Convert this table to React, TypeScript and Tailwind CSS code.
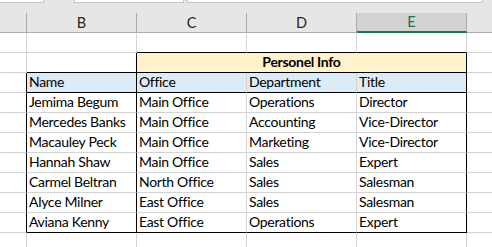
import React from "react";

const rows = [
  ["Jemima Begum", "Main Office", "Operations", "Director"],
  ["Mercedes Banks", "Main Office", "Accounting", "Vice-Director"],
  ["Macauley Peck", "Main Office", "Marketing", "Vice-Director"],
  ["Hannah Shaw", "Main Office", "Sales", "Expert"],
  ["Carmel Beltran", "North Office", "Sales", "Salesman"],
  ["Alyce Milner", "East Office", "Sales", "Salesman"],
  ["Aviana Kenny", "East Office", "Operations", "Expert"],
];

const grid = "border-[#d4d4d4]";
const cellText =
  "flex items-end px-[2px] pb-[2px] text-[14px] leading-[16px] tracking-[-0.3px] text-black whitespace-nowrap";

function Cell({
  className = "",
  children,
}: {
  className?: string;
  children?: React.ReactNode;
}) {
  return <div className={`h-[20px] shrink-0 ${cellText} ${className}`}>{children}</div>;
}

function ColHead({ label, active = false }: { label: string; active?: boolean }) {
  return (
    <div
      className={`flex h-[20px] w-[110px] shrink-0 items-center justify-center border-r border-[#ababab] text-[14.5px] ${
        active
          ? "border-b-2 border-b-[#217346] bg-[#d2d2d2] text-[#217346]"
          : "border-b border-b-[#ababab] text-[#262626]"
      }`}
    >
      {label}
    </div>
  );
}

export default function App() {
  return (
    <div
      className="h-[247px] w-[492px] overflow-hidden bg-white"
      style={{ fontFamily: "Lato, 'Liberation Sans', sans-serif" }}
    >
      {/* formula bar edge */}
      <div className="flex h-[3px] bg-[#e6e6e6]">
        <div className="w-[44px] border-r border-b border-[#c6c6c6] bg-white" />
        <div className="w-[30px]" />
        <div className="w-[110px] border-x border-b border-[#c6c6c6] bg-white" />
        <div className="w-[3px]" />
        <div className="w-[296px] border-x border-b border-[#c6c6c6] bg-white" />
      </div>
      <div className="h-[10px] bg-[#e6e6e6]" />

      {/* column letters */}
      <div className="flex bg-[#e6e6e6]">
        <div className="h-[20px] w-[27px] shrink-0 border-r border-b border-[#ababab]" />
        <ColHead label="B" />
        <ColHead label="C" />
        <ColHead label="D" />
        <ColHead label="E" active />
        <div className="h-[20px] flex-1 border-b border-[#ababab]" />
      </div>

      {/* row: blank */}
      <div className="flex">
        <Cell className={`w-[27px] border-r border-b ${grid}`} />
        <Cell className={`w-[110px] border-r border-b ${grid}`} />
        <Cell className={`w-[110px] border-r border-b ${grid} border-b-black`} />
        <Cell className={`w-[110px] border-r border-b ${grid} border-b-black`} />
        <Cell className={`w-[110px] border-r border-b ${grid} border-b-black`} />
        <Cell className={`flex-1 border-b ${grid}`} />
      </div>

      {/* row: group title */}
      <div className="flex">
        <Cell className={`w-[27px] border-r border-b ${grid}`} />
        <Cell className="w-[110px] border-r border-b border-black" />
        <Cell className="w-[330px] justify-center border-r border-b border-black bg-[#fff2cc] font-bold">
          Personel Info
        </Cell>
        <Cell className={`flex-1 border-b ${grid}`} />
      </div>

      {/* row: headings */}
      <div className="flex">
        <Cell className="w-[27px] border-r border-b border-black border-b-[#d4d4d4]" />
        <Cell className="w-[110px] border-r border-b border-black bg-[#ddebf7]">Name</Cell>
        <Cell className="w-[110px] border-r border-b border-black border-r-[#d4d4d4] bg-[#ddebf7]">Office</Cell>
        <Cell className="w-[110px] border-r border-b border-black border-r-[#d4d4d4] bg-[#ddebf7]">Department</Cell>
        <Cell className="w-[110px] border-r border-b border-black bg-[#ddebf7]">Title</Cell>
        <Cell className={`flex-1 border-b ${grid}`} />
      </div>

      {rows.map((r, i) => {
        const last = i === rows.length - 1;
        const bottom = last ? "border-b-black" : "border-b-[#d4d4d4]";
        return (
          <div className="flex" key={r[0]}>
            <Cell className="w-[27px] border-r border-b border-r-black border-b-[#d4d4d4]" />
            <Cell className={`w-[110px] border-r border-b border-r-black ${bottom}`}>{r[0]}</Cell>
            <Cell className={`w-[110px] border-r border-b border-r-[#d4d4d4] ${bottom}`}>{r[1]}</Cell>
            <Cell className={`w-[110px] border-r border-b border-r-[#d4d4d4] ${bottom}`}>{r[2]}</Cell>
            <Cell className={`w-[110px] border-r border-b border-r-black ${bottom}`}>{r[3]}</Cell>
            <Cell className={`flex-1 border-b ${grid}`} />
          </div>
        );
      })}

      {/* trailing empty row */}
      <div className="flex">
        <Cell className={`w-[27px] border-r border-b ${grid}`} />
        <Cell className={`w-[110px] border-r border-b ${grid}`} />
        <Cell className={`w-[110px] border-r border-b ${grid}`} />
        <Cell className={`w-[110px] border-r border-b ${grid}`} />
        <Cell className={`w-[110px] border-r border-b ${grid}`} />
        <Cell className={`flex-1 border-b ${grid}`} />
      </div>
    </div>
  );
}
